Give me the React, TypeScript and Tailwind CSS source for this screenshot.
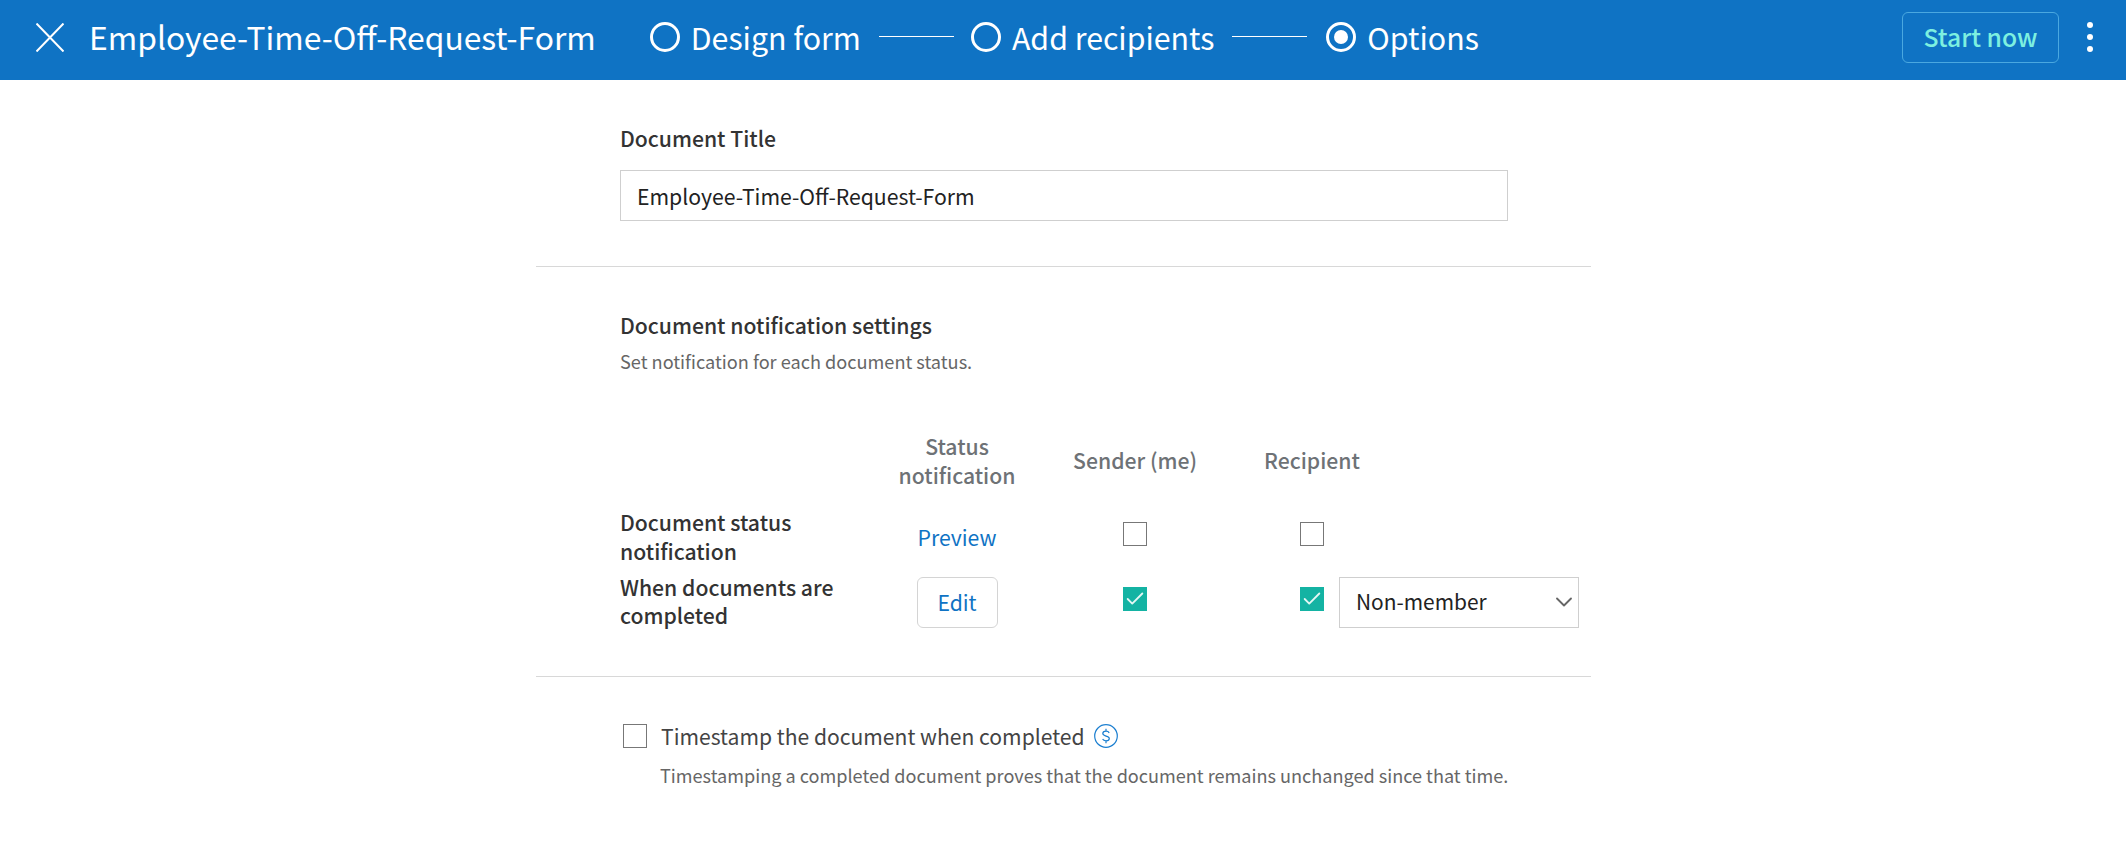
import React from 'react';
import { Check, ChevronDown } from 'lucide-react';

const Step: React.FC<{ label: string; active?: boolean }> = ({ label, active }) => (
  <div className="flex items-center">
    <span className="flex h-[30px] w-[30px] items-center justify-center rounded-full border-[3px] border-white">
      {active && <span className="h-[14px] w-[14px] rounded-full bg-white" />}
    </span>
    <span className="ml-[11px] text-[30.3px] leading-none text-white">{label}</span>
  </div>
);

const Checkbox: React.FC<{ checked?: boolean }> = ({ checked }) =>
  checked ? (
    <span className="flex h-[24px] w-[24px] items-center justify-center bg-[#14b3a3]">
      <Check size={22} strokeWidth={2} className="text-[#e4f7f4]" />
    </span>
  ) : (
    <span className="block h-[24px] w-[24px] border border-[#777777] bg-white" />
  );

const App: React.FC = () => {
  return (
    <div className="min-h-[853px] bg-white font-['Noto_Sans_CJK_KR',sans-serif]">
      <header className="flex h-[80px] items-center bg-[#0f73c4] pb-[6px] pl-[36px] pr-[33px]">
        <svg viewBox="0 0 28 29" className="h-[29px] w-[28px]" fill="none" stroke="white" strokeWidth="2">
          <path d="M0.5 0.5 27.5 28.5M27.5 0.5 0.5 28.5" />
        </svg>
        <h1 className="ml-[25px] text-[31.8px] leading-none text-white">Employee-Time-Off-Request-Form</h1>
        <div className="ml-[54px] flex items-center">
          <Step label="Design form" />
          <span className="ml-[18px] mr-[17px] h-px w-[75px] bg-white" />
          <Step label="Add recipients" />
          <span className="ml-[18px] mr-[19px] h-px w-[75px] bg-white" />
          <Step label="Options" active />
        </div>
        <button className="ml-auto flex h-[51px] w-[157px] items-center justify-center rounded-[6px] border border-[#4aa8e0] text-[24.7px] font-medium text-[#7df0e0]">
          Start now
        </button>
        <div className="ml-[28px] flex flex-col gap-[6px]">
          <span className="h-[6px] w-[6px] rounded-full bg-white" />
          <span className="h-[6px] w-[6px] rounded-full bg-white" />
          <span className="h-[6px] w-[6px] rounded-full bg-white" />
        </div>
      </header>

      <main className="ml-[536px] w-[1055px]">
        <section className="h-[187px] border-b border-[#d8d8d8] pl-[84px] pr-[83px] pt-[43px]">
          <h2 className="text-[21.2px] font-medium leading-[30px] text-[#333333]">Document Title</h2>
          <div className="mt-[17px] flex h-[51px] w-[888px] items-center border border-[#cfcfcf] pl-[16px] text-[21.2px] text-[#222222]">
            Employee-Time-Off-Request-Form
          </div>
        </section>

        <section className="h-[410px] border-b border-[#d8d8d8] pl-[84px] pt-[43px]">
          <h2 className="text-[21.2px] font-medium leading-[30px] text-[#333333]">Document notification settings</h2>
          <p className="mt-[8px] text-[18.15px] leading-[26px] text-[#666666]">Set notification for each document status.</p>

          <div className="mt-[57px] grid grid-cols-[260px_154px_202px_343px] items-center">
            <div />
            <div className="text-center text-[21.2px] font-medium leading-[29px] text-[#6e7276]">
              Status
              <br />
              notification
            </div>
            <div className="text-center text-[21.2px] font-medium text-[#6e7276]">Sender (me)</div>
            <div className="w-[152px] text-center text-[21.2px] font-medium text-[#6e7276]">Recipient</div>

            <div className="mt-[18px] text-[21.2px] font-medium leading-[29px] text-[#333333]">
              Document status
              <br />
              notification
            </div>
            <div className="mt-[18px] text-center text-[21.2px] leading-[29px] text-[#0f73c4]">Preview</div>
            <div className="mt-[14px] flex justify-center">
              <Checkbox />
            </div>
            <div className="mt-[14px] pl-[64px]">
              <Checkbox />
            </div>

            <div className="mt-[8px] text-[21.2px] font-medium leading-[28px] text-[#333333]">
              When documents are
              <br />
              completed
            </div>
            <div className="mt-[10px] flex justify-center">
              <button className="h-[51px] w-[81px] rounded-[6px] border border-[#d4d4d4] text-[21.2px] text-[#0f73c4]">Edit</button>
            </div>
            <div className="mt-[4px] flex justify-center">
              <Checkbox checked />
            </div>
            <div className="mt-[10px] flex items-center pl-[64px]">
              <span className="-mt-[6px]">
                <Checkbox checked />
              </span>
              <div className="ml-[15px] flex h-[51px] w-[240px] items-center justify-between border border-[#cfcfcf] pl-[16px] text-[20.9px] text-[#222222]">
                Non-member
                <ChevronDown size={28} strokeWidth={1.6} className="text-[#666666]" />
              </div>
            </div>
          </div>
        </section>

        <section className="pl-[87px] pt-[47px]">
          <div className="flex items-center">
            <Checkbox />
            <span className="ml-[14px] text-[21.1px] leading-[24px] text-[#444444]">Timestamp the document when completed</span>
            <svg viewBox="0 0 24 24" className="ml-[9px] h-[24px] w-[24px] text-[#1c7fd0]" fill="none" stroke="currentColor">
              <circle cx="12" cy="12" r="11.3" strokeWidth="1.2" />
              <path d="M15.2 8.9c-.6-1.1-1.7-1.7-3.2-1.7-1.8 0-3.2.9-3.2 2.4 0 3.3 6.5 1.7 6.5 5 0 1.5-1.4 2.3-3.3 2.3-1.6 0-2.8-.6-3.4-1.8M12 4.8v2.4M12 16.9v2.3" strokeWidth="1.2" />
            </svg>
          </div>
          <p className="ml-[37px] mt-[14px] text-[18.1px] leading-[26px] text-[#666666]">
            Timestamping a completed document proves that the document remains unchanged since that time.
          </p>
        </section>
      </main>
    </div>
  );
};

export default App;
